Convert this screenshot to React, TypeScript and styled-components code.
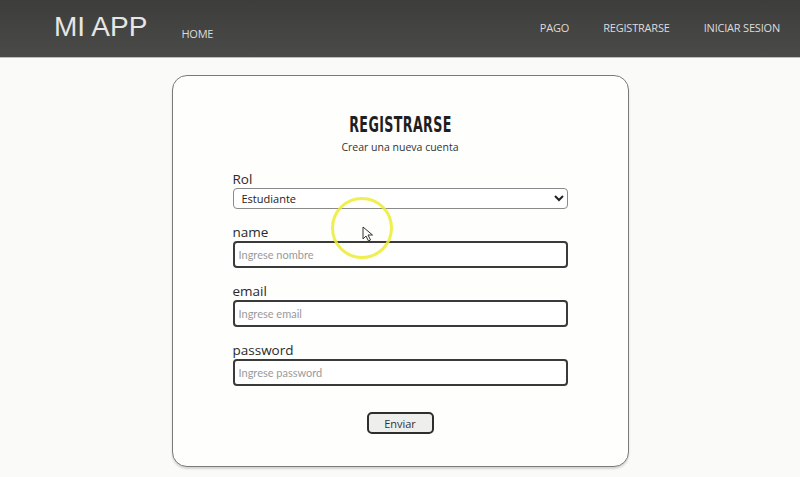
import React from "react";
import styled, { createGlobalStyle } from "styled-components";

const Global = createGlobalStyle`
  html, body {
    margin: 0;
    padding: 0;
    background: #fafaf8;
    font-family: "Open Sans", "Noto Sans", sans-serif;
  }
  * { box-sizing: border-box; }
`;

const Header = styled.header`
  height: 58px;
  background: linear-gradient(#3d3d3c, #4a4a49);
  display: flex;
  align-items: center;
  padding: 0 20px 0 54px;
  border-bottom: 1px solid #bdbdbd;
`;

const Brand = styled.div`
  font-family: "Liberation Sans", Arial, sans-serif;
  font-size: 28px;
  color: #e6e6e4;
  margin-top: -3px;
`;

const NavLink = styled.a`
  font-family: "Open Sans", sans-serif;
  font-size: 11px;
  color: #dcdcda;
  text-decoration: none;
  letter-spacing: -0.2px;
`;

const HomeLink = styled(NavLink)`
  margin-left: 34px;
  margin-top: 10px;
`;

const RightNav = styled.nav`
  margin-left: auto;
  display: flex;
  gap: 34px;
  margin-top: -2px;
`;

const Main = styled.main`
  display: flex;
  justify-content: center;
  padding-top: 17px;
  position: relative;
  height: 419px;
`;

const Card = styled.section`
  width: 457px;
  height: 392px;
  background: #fefefd;
  border: 1.5px solid #7a7a7a;
  border-radius: 15px;
  box-shadow: 0 2px 2px rgba(0, 0, 0, 0.15);
  padding: 37px 60px 0 60px;
  display: flex;
  flex-direction: column;
`;

const Title = styled.h1`
  margin: 0;
  text-align: center;
  font-family: "DejaVu Sans Condensed", "Liberation Sans Narrow", sans-serif;
  font-weight: bold;
  font-size: 22px;
  line-height: 24px;
  color: #1f1f1f;
  letter-spacing: 0.6px;
  transform: scaleX(0.64);
`;

const Subtitle = styled.p`
  margin: 3px 0 16px;
  text-align: center;
  font-size: 10.5px;
  color: #333;
`;

const Field = styled.div`
  display: flex;
  flex-direction: column;
  margin-bottom: 14px;
`;

const Label = styled.label`
  font-size: 13.5px;
  color: #2a2a2a;
  line-height: 18px;
`;

const Select = styled.select`
  height: 21px;
  border: 1px solid #8a8a8a;
  border-radius: 4px;
  font-family: "Open Sans", sans-serif;
  font-size: 11px;
  color: #222;
  background: #fff;
  padding: 0 4px;
`;

const Input = styled.input`
  height: 27px;
  border: 2px solid #3a3a3a;
  border-radius: 4px;
  font-family: "Lato", "Open Sans", sans-serif;
  font-size: 11px;
  padding: 0 4px;
  background: #fff;
  &::placeholder { color: #9a9a9a; }
`;

const ButtonRow = styled.div`
  display: flex;
  justify-content: center;
  margin-top: 12px;
`;

const Button = styled.button`
  width: 67px;
  height: 22px;
  border: 2px solid #2e2e2e;
  border-radius: 5px;
  background: #eeeeec;
  font-family: "Open Sans", sans-serif;
  font-size: 11px;
  color: #333;
  padding: 0;
`;

const Highlight = styled.div`
  position: absolute;
  left: 331px;
  top: 139px;
  width: 62px;
  height: 62px;
  border: 3px solid rgba(236, 236, 50, 0.85);
  border-radius: 50%;
  pointer-events: none;
`;

const Pointer = styled.svg`
  position: absolute;
  left: 362px;
  top: 168px;
  pointer-events: none;
`;

export default function App() {
  return (
    <>
      <Global />
      <Header>
        <Brand>MI APP</Brand>
        <HomeLink href="#">HOME</HomeLink>
        <RightNav>
          <NavLink href="#">PAGO</NavLink>
          <NavLink href="#">REGISTRARSE</NavLink>
          <NavLink href="#">INICIAR SESION</NavLink>
        </RightNav>
      </Header>
      <Main>
        <Card>
          <Title>REGISTRARSE</Title>
          <Subtitle>Crear una nueva cuenta</Subtitle>
          <Field>
            <Label>Rol</Label>
            <Select defaultValue="Estudiante">
              <option>Estudiante</option>
              <option>Profesor</option>
            </Select>
          </Field>
          <Field>
            <Label>name</Label>
            <Input placeholder="Ingrese nombre" />
          </Field>
          <Field>
            <Label>email</Label>
            <Input placeholder="Ingrese email" />
          </Field>
          <Field>
            <Label>password</Label>
            <Input type="password" placeholder="Ingrese password" />
          </Field>
          <ButtonRow>
            <Button>Enviar</Button>
          </ButtonRow>
        </Card>
        <Highlight />
        <Pointer width="12" height="16" viewBox="0 0 12 16">
          <path d="M1 1 L1 13 L4 10 L6.5 15 L8.5 14 L6 9 L10.5 9 Z" fill="#fff" stroke="#333" strokeWidth="1" />
        </Pointer>
      </Main>
    </>
  );
}
